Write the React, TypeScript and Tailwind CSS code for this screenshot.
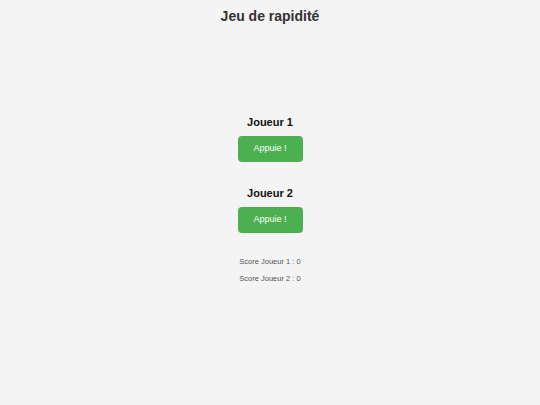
import { useState } from "react";

export default function App() {
  const [score1, setScore1] = useState(0);
  const [score2, setScore2] = useState(0);

  return (
    <div className="min-h-[405px] w-full bg-[#f4f4f4] flex flex-col items-center font-['Liberation_Sans',Arial,sans-serif]">
      <h1 className="pt-[8px] text-[14px] leading-[17px] font-bold text-[#333]">
        Jeu de rapidité
      </h1>

      <div className="mt-[91px] flex flex-col items-center">
        <h2 className="text-[11px] leading-[13px] font-bold text-[#111]">Joueur 1</h2>
        <button
          className="mt-[7px] w-[65px] h-[26px] rounded-[4px] bg-[#4caf50] text-white text-[9px]"
          onClick={() => setScore1(score1 + 1)}
        >
          Appuie !
        </button>
      </div>

      <div className="mt-[25px] flex flex-col items-center">
        <h2 className="text-[11px] leading-[13px] font-bold text-[#111]">Joueur 2</h2>
        <button
          className="mt-[7px] w-[65px] h-[26px] rounded-[4px] bg-[#4caf50] text-white text-[9px]"
          onClick={() => setScore2(score2 + 1)}
        >
          Appuie !
        </button>
      </div>

      <div className="mt-[24px] flex flex-col items-center gap-[7px] text-[7.5px] leading-[10px] text-[#555]">
        <p>Score Joueur 1 : {score1}</p>
        <p>Score Joueur 2 : {score2}</p>
      </div>
    </div>
  );
}
